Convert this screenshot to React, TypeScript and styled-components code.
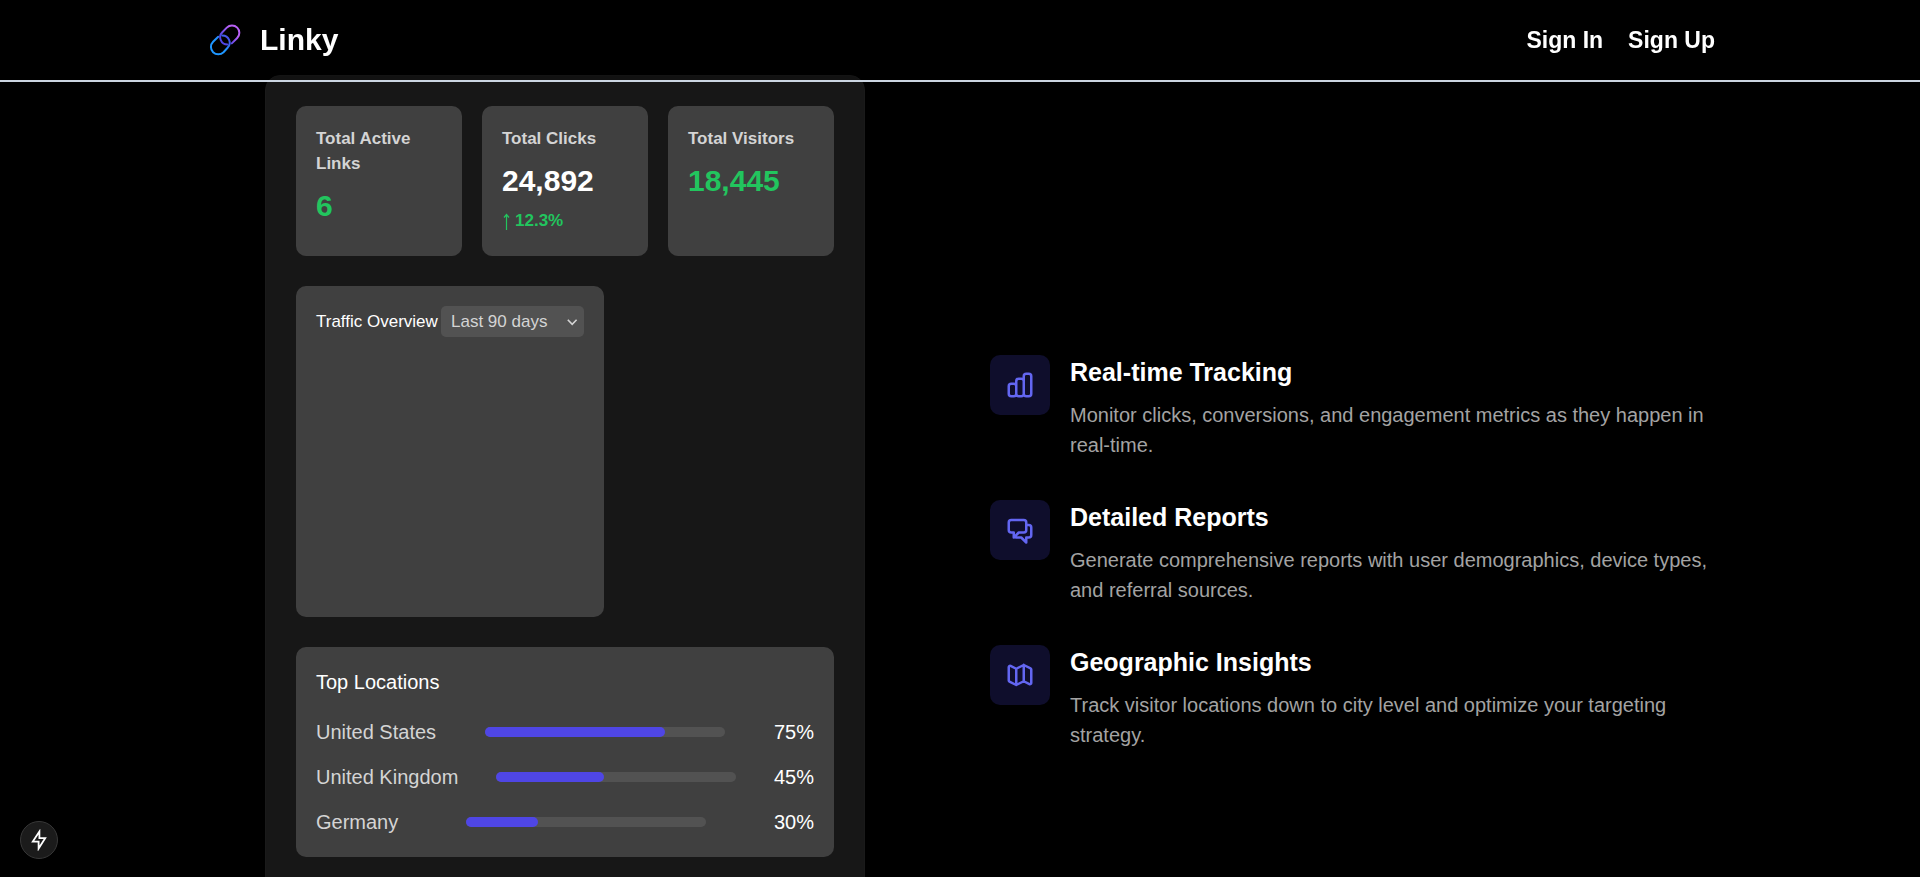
import React from "react";
import styled, { createGlobalStyle } from "styled-components";

const GlobalStyle = createGlobalStyle`
  *, *::before, *::after { box-sizing: border-box; }
  body {
    margin: 0;
    background: #000;
    color: #fff;
    font-family: "Liberation Sans", Arial, sans-serif;
    font-size: 20px;
    line-height: 30px;
  }
  h1, h2, h3, p, ul { margin: 0; padding: 0; }
`;

const Page = styled.div`
  height: 100vh;
  overflow-y: auto;
  scrollbar-width: none;
  background: #000;
`;

const Header = styled.header`
  position: sticky;
  top: 0;
  z-index: 10;
  height: 82px;
  border-bottom: 2px solid #cbd5e1;
  background: rgba(0, 0, 0, 0.2);
`;

const HeaderInner = styled.div`
  display: flex;
  align-items: center;
  justify-content: space-between;
  width: 100%;
  max-width: 1510px;
  height: 100%;
  margin: 0 auto;
`;

const Brand = styled.a`
  display: flex;
  align-items: center;
  gap: 15px;
  color: #fff;
  font-size: 30px;
  font-weight: 700;
  line-height: 40px;
  text-decoration: none;
`;

const Nav = styled.nav`
  display: flex;
  gap: 25px;
`;

const NavLink = styled.a`
  color: #fff;
  font-size: 23px;
  font-weight: 700;
  text-decoration: none;
`;

const Main = styled.main`
  display: grid;
  grid-template-columns: 1fr 1fr;
  gap: 60px;
  align-items: center;
  width: 100%;
  max-width: 1600px;
  margin: -7px auto 0;
  padding: 0 40px 60px;
`;

const Panel = styled.section`
  justify-self: center;
  display: flex;
  flex-direction: column;
  gap: 30px;
  width: 100%;
  max-width: 600px;
  min-height: 955px;
  padding: 30px;
  border: 1px solid #1a1a1a;
  border-radius: 15px;
  background: #171717;
`;

const StatGrid = styled.div`
  display: grid;
  grid-template-columns: repeat(3, 1fr);
  gap: 20px;
`;

const Card = styled.div`
  padding: 20px;
  border-radius: 10px;
  background: #404040;
`;

const StatLabel = styled.h3`
  margin-bottom: 10px;
  color: #d4d4d4;
  font-size: 17px;
  font-weight: 700;
  line-height: 25px;
`;

const StatValue = styled.p<{ $positive?: boolean }>`
  color: ${(p) => (p.$positive ? "#22c55e" : "#fff")};
  font-size: 30px;
  font-weight: 700;
  line-height: 40px;
`;

const StatChange = styled.p`
  display: flex;
  align-items: center;
  gap: 5px;
  margin-top: 5px;
  color: #22c55e;
  font-size: 17px;
  font-weight: 700;
  line-height: 30px;
`;

const TrafficCard = styled(Card)`
  width: 308px;
`;

const TrafficHead = styled.div`
  display: flex;
  align-items: center;
  justify-content: space-between;
  margin-bottom: 20px;
`;

const TrafficLabel = styled.label`
  font-size: 17px;
  line-height: 25px;
  white-space: nowrap;
`;

const SelectWrap = styled.div`
  display: grid;
  align-items: center;

  > * { grid-area: 1 / 1; }
  > svg {
    justify-self: end;
    margin-right: 5px;
    color: #d4d4d4;
    pointer-events: none;
  }
`;

const RangeSelect = styled.select`
  appearance: none;
  width: 143px;
  height: 31px;
  padding: 0 10px;
  border: 0;
  border-radius: 5px;
  background: #525252;
  color: #d4d4d4;
  font-family: inherit;
  font-size: 17px;
`;

const ChartArea = styled.div`
  height: 240px;
`;

const CardTitle = styled.h3`
  margin-bottom: 20px;
  font-size: 20px;
  font-weight: 400;
`;

const LocationList = styled.ul`
  display: flex;
  flex-direction: column;
  gap: 15px;
  list-style: none;
`;

const LocationRow = styled.li`
  display: flex;
  align-items: center;
  justify-content: space-between;
`;

const LocationName = styled.span`
  color: #d4d4d4;
`;

const Track = styled.div`
  width: 240px;
  height: 10px;
  border-radius: 5px;
  background: #525252;
`;

const Fill = styled.div`
  height: 100%;
  border-radius: 5px;
  background: #4f46e5;
`;

const FeatureList = styled.section`
  display: flex;
  flex-direction: column;
  gap: 40px;
`;

const Feature = styled.article`
  display: flex;
  align-items: flex-start;
  gap: 20px;
`;

const IconTile = styled.div`
  display: flex;
  flex-shrink: 0;
  align-items: center;
  justify-content: center;
  width: 60px;
  height: 60px;
  border-radius: 10px;
  background: #0f0e2c;
  color: #6366f1;
`;

const FeatureTitle = styled.h2`
  margin-bottom: 10px;
  font-size: 25px;
  font-weight: 700;
  line-height: 35px;
`;

const FeatureText = styled.p`
  color: #a3a3a3;
`;

const QuickButton = styled.button`
  position: fixed;
  bottom: 18px;
  left: 20px;
  z-index: 20;
  display: flex;
  align-items: center;
  justify-content: center;
  width: 38px;
  height: 38px;
  padding: 0;
  border: 1px solid #383838;
  border-radius: 50%;
  background: #1b1b1b;
  color: #fff;
`;

const Logo = () => (
  <svg width="40" height="40" viewBox="0 0 40 40" fill="none" strokeWidth="2" strokeLinecap="round" aria-hidden="true">
    <defs>
      <linearGradient id="upper" x1="16" y1="24" x2="33" y2="8" gradientUnits="userSpaceOnUse">
        <stop offset="0.25" stopColor="#5046e5" />
        <stop offset="0.75" stopColor="#b860f5" />
      </linearGradient>
      <linearGradient id="lower" x1="6" y1="32" x2="24" y2="16" gradientUnits="userSpaceOnUse">
        <stop offset="0.5" stopColor="#1e96ff" />
        <stop offset="1" stopColor="#5046e5" />
      </linearGradient>
    </defs>
    <path d="M26.8 23.4L32.2 18A7.3 7.3 0 0 0 21.8 7.6L17.3 12.2A7.3 7.3 0 0 0 22.5 24.6" stroke="url(#upper)" />
    <path d="M13.2 16.7L8.1 21.8A7.3 7.3 0 0 0 18.5 32.2L22.6 27.8A7.3 7.3 0 0 0 17.4 15.4" stroke="url(#lower)" />
  </svg>
);

const iconProps = {
  width: 30,
  height: 30,
  viewBox: "0 0 24 24",
  fill: "none",
  stroke: "currentColor",
  strokeWidth: 2,
  strokeLinecap: "round" as const,
  strokeLinejoin: "round" as const,
  "aria-hidden": true,
};

const BarsIcon = () => (
  <svg {...iconProps}>
    <path d="M9 19v-6a2 2 0 0 0-2-2H5a2 2 0 0 0-2 2v6a2 2 0 0 0 2 2h2a2 2 0 0 0 2-2zm0 0V9a2 2 0 0 1 2-2h2a2 2 0 0 1 2 2v10m-6 0a2 2 0 0 0 2 2h2a2 2 0 0 0 2-2m0 0V5a2 2 0 0 1 2-2h2a2 2 0 0 1 2 2v14a2 2 0 0 1-2 2h-2a2 2 0 0 1-2-2z" />
  </svg>
);

const ChatIcon = () => (
  <svg {...iconProps}>
    <path d="M17 8h2a2 2 0 0 1 2 2v6a2 2 0 0 1-2 2h-2v4l-4-4H9a1.994 1.994 0 0 1-1.414-.586m0 0L11 14h4a2 2 0 0 0 2-2V6a2 2 0 0 0-2-2H5a2 2 0 0 0-2 2v6a2 2 0 0 0 2 2h2v4l.586-.586z" />
  </svg>
);

const MapIcon = () => (
  <svg {...iconProps}>
    <path d="M9 20l-5.447-2.724A1 1 0 0 1 3 16.382V5.618a1 1 0 0 1 1.447-.894L9 7m0 13l6-3m-6 3V7m6 10l4.553 2.276A1 1 0 0 0 21 18.382V7.618a1 1 0 0 0-.553-.894L15 4m0 13V4m0 0L9 7" />
  </svg>
);

const UpArrow = () => (
  <svg width="8" height="18" viewBox="0 0 8 18" fill="none" stroke="currentColor" strokeWidth="1.2" role="img" aria-label="up">
    <path d="M4.5 18V2.5M2 5.5L4.5 2.5L7 5.5" />
  </svg>
);

const ChevronDown = () => (
  <svg width="14" height="10" viewBox="0 0 14 10" fill="none" stroke="currentColor" strokeWidth="1.6" aria-hidden="true">
    <path d="M2.8 2.8L7.2 7.4L11.6 2.8" />
  </svg>
);

const locations = [
  { name: "United States", share: 75 },
  { name: "United Kingdom", share: 45 },
  { name: "Germany", share: 30 },
];

const features = [
  {
    icon: <BarsIcon />,
    title: "Real-time Tracking",
    text: "Monitor clicks, conversions, and engagement metrics as they happen in real-time.",
  },
  {
    icon: <ChatIcon />,
    title: "Detailed Reports",
    text: "Generate comprehensive reports with user demographics, device types, and referral sources.",
  },
  {
    icon: <MapIcon />,
    title: "Geographic Insights",
    text: "Track visitor locations down to city level and optimize your targeting strategy.",
  },
];

export default function App() {
  return (
    <Page>
      <GlobalStyle />
      <Header>
        <HeaderInner>
          <Brand href="#">
            <Logo />
            Linky
          </Brand>
          <Nav>
            <NavLink href="#sign-in">Sign In</NavLink>
            <NavLink href="#sign-up">Sign Up</NavLink>
          </Nav>
        </HeaderInner>
      </Header>
      <Main>
        <Panel>
          <StatGrid>
            <Card>
              <StatLabel>Total Active Links</StatLabel>
              <StatValue $positive>6</StatValue>
            </Card>
            <Card>
              <StatLabel>Total Clicks</StatLabel>
              <StatValue>24,892</StatValue>
              <StatChange>
                <UpArrow />
                12.3%
              </StatChange>
            </Card>
            <Card>
              <StatLabel>Total Visitors</StatLabel>
              <StatValue $positive>18,445</StatValue>
            </Card>
          </StatGrid>
          <TrafficCard>
            <TrafficHead>
              <TrafficLabel htmlFor="range">Traffic Overview</TrafficLabel>
              <SelectWrap>
                <RangeSelect id="range" defaultValue="90">
                  <option value="90">Last 90 days</option>
                  <option value="30">Last 30 days</option>
                  <option value="7">Last 7 days</option>
                </RangeSelect>
                <ChevronDown />
              </SelectWrap>
            </TrafficHead>
            <ChartArea />
          </TrafficCard>
          <Card>
            <CardTitle>Top Locations</CardTitle>
            <LocationList>
              {locations.map((l) => (
                <LocationRow key={l.name}>
                  <LocationName>{l.name}</LocationName>
                  <Track>
                    <Fill style={{ width: `${l.share}%` }} />
                  </Track>
                  <span>{l.share}%</span>
                </LocationRow>
              ))}
            </LocationList>
          </Card>
        </Panel>
        <FeatureList>
          {features.map((f) => (
            <Feature key={f.title}>
              <IconTile>{f.icon}</IconTile>
              <div>
                <FeatureTitle>{f.title}</FeatureTitle>
                <FeatureText>{f.text}</FeatureText>
              </div>
            </Feature>
          ))}
        </FeatureList>
      </Main>
      <QuickButton type="button" aria-label="Developer tools">
        <svg width="20" height="22" viewBox="0 0 20 22" fill="none" stroke="currentColor" strokeWidth="1.8" aria-hidden="true">
          <path d="M10.4 2.6L3.8 12.6H9.6V19.6L16.2 9.2H10.4V2.6Z" />
        </svg>
      </QuickButton>
    </Page>
  );
}
